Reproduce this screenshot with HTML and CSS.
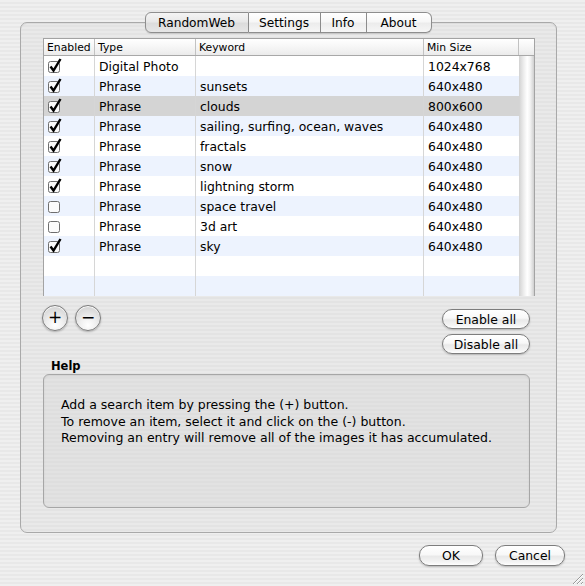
FILE: index.html
```html
<!DOCTYPE html>
<html>
<head>
<meta charset="utf-8">
<link rel="stylesheet" href="styles.css">
</head>
<body>
<div class="window">
  <div class="tabview">
    <div class="tabs">
      <span class="tab t1 active">RandomWeb</span><span class="tab t2">Settings</span><span class="tab t3">Info</span><span class="tab t4">About</span>
    </div>
    <div class="panel">
      <div class="table">
        <div class="thead">
          <div class="th">Enabled</div>
          <div class="th">Type</div>
          <div class="th">Keyword</div>
          <div class="th">Min Size</div>
          <div class="th corner"></div>
        </div>
        <div class="tbody">
          <div class="rows">
            <div class="row"><div class="td cb"><svg class="check" viewBox="0 0 16 16" width="16" height="16"><rect x="1.5" y="3.5" width="11" height="11" rx="2" class="box"/><path d="M3.5 8.5 L6.5 12.5 L13.5 1" class="mark"/></svg></div><div class="td">Digital Photo</div><div class="td"></div><div class="td">1024x768</div></div>
            <div class="row alt"><div class="td cb"><svg class="check" viewBox="0 0 16 16" width="16" height="16"><rect x="1.5" y="3.5" width="11" height="11" rx="2" class="box"/><path d="M3.5 8.5 L6.5 12.5 L13.5 1" class="mark"/></svg></div><div class="td">Phrase</div><div class="td">sunsets</div><div class="td">640x480</div></div>
            <div class="row sel"><div class="td cb"><svg class="check" viewBox="0 0 16 16" width="16" height="16"><rect x="1.5" y="3.5" width="11" height="11" rx="2" class="box"/><path d="M3.5 8.5 L6.5 12.5 L13.5 1" class="mark"/></svg></div><div class="td">Phrase</div><div class="td">clouds</div><div class="td">800x600</div></div>
            <div class="row alt"><div class="td cb"><svg class="check" viewBox="0 0 16 16" width="16" height="16"><rect x="1.5" y="3.5" width="11" height="11" rx="2" class="box"/><path d="M3.5 8.5 L6.5 12.5 L13.5 1" class="mark"/></svg></div><div class="td">Phrase</div><div class="td">sailing, surfing, ocean, waves</div><div class="td">640x480</div></div>
            <div class="row"><div class="td cb"><svg class="check" viewBox="0 0 16 16" width="16" height="16"><rect x="1.5" y="3.5" width="11" height="11" rx="2" class="box"/><path d="M3.5 8.5 L6.5 12.5 L13.5 1" class="mark"/></svg></div><div class="td">Phrase</div><div class="td">fractals</div><div class="td">640x480</div></div>
            <div class="row alt"><div class="td cb"><svg class="check" viewBox="0 0 16 16" width="16" height="16"><rect x="1.5" y="3.5" width="11" height="11" rx="2" class="box"/><path d="M3.5 8.5 L6.5 12.5 L13.5 1" class="mark"/></svg></div><div class="td">Phrase</div><div class="td">snow</div><div class="td">640x480</div></div>
            <div class="row"><div class="td cb"><svg class="check" viewBox="0 0 16 16" width="16" height="16"><rect x="1.5" y="3.5" width="11" height="11" rx="2" class="box"/><path d="M3.5 8.5 L6.5 12.5 L13.5 1" class="mark"/></svg></div><div class="td">Phrase</div><div class="td">lightning storm</div><div class="td">640x480</div></div>
            <div class="row alt"><div class="td cb"><svg class="check" viewBox="0 0 16 16" width="16" height="16"><rect x="1.5" y="3.5" width="11" height="11" rx="2" class="box"/></svg></div><div class="td">Phrase</div><div class="td">space travel</div><div class="td">640x480</div></div>
            <div class="row"><div class="td cb"><svg class="check" viewBox="0 0 16 16" width="16" height="16"><rect x="1.5" y="3.5" width="11" height="11" rx="2" class="box"/></svg></div><div class="td">Phrase</div><div class="td">3d art</div><div class="td">640x480</div></div>
            <div class="row alt"><div class="td cb"><svg class="check" viewBox="0 0 16 16" width="16" height="16"><rect x="1.5" y="3.5" width="11" height="11" rx="2" class="box"/><path d="M3.5 8.5 L6.5 12.5 L13.5 1" class="mark"/></svg></div><div class="td">Phrase</div><div class="td">sky</div><div class="td">640x480</div></div>
            <div class="row"><div class="td cb"></div><div class="td"></div><div class="td"></div><div class="td"></div></div>
            <div class="row alt"><div class="td cb"></div><div class="td"></div><div class="td"></div><div class="td"></div></div>
          </div>
          <div class="vscroll"></div>
        </div>
      </div>

      <div class="controls">
        <div class="pm">
          <span class="round">+</span>
          <span class="round">−</span>
        </div>
        <div class="enable">
          <span class="pill wide">Enable all</span>
          <span class="pill wide">Disable all</span>
        </div>
      </div>

      <div class="help-label">Help</div>
      <div class="help-box">
        <p>Add a search item by pressing the (+) button.</p>
        <p>To remove an item, select it and click on the (-) button.</p>
        <p>Removing an entry will remove all of the images it has accumulated.</p>
      </div>
    </div>
  </div>

  <div class="footer">
    <span class="pill ok">OK</span>
    <span class="pill cancel">Cancel</span>
  </div>

  <svg class="grip" width="12" height="12" viewBox="0 0 12 12">
    <path d="M1 11 L11 1 M5 11 L11 5 M9 11 L11 9" stroke="#9a9a9a" stroke-width="1"/>
    <path d="M2 11 L11 2 M6 11 L11 6 M10 11 L11 10" stroke="#ffffff" stroke-width="1"/>
  </svg>
</div>
</body>
</html>
```

FILE: styles.css
```css
* { box-sizing: border-box; }
html, body { margin: 0; padding: 0; }
body {
  width: 585px;
  height: 586px;
  overflow: hidden;
  font-family: "DejaVu Sans", "Liberation Sans", sans-serif;
  font-size: 12px;
  color: #000;
  background: repeating-linear-gradient(to bottom, #efefef 0px, #efefef 2px, #e8e8e8 2px, #e8e8e8 4px);
}
.window {
  position: relative;
  width: 585px;
  height: 586px;
}
.tabview {
  margin: 0 28px 0 20px;
  padding-top: 12px;
}
.tabs {
  position: relative;
  z-index: 1;
  display: flex;
  justify-content: center;
  height: 21px;
  margin-left: -1px;
}
.tab {
  display: flex;
  align-items: center;
  justify-content: center;
  height: 21px;
  font-size: 12.2px;
  border: 1px solid #8e8e8e;
  border-left: none;
  background: linear-gradient(to bottom, #ffffff 0%, #f7f7f7 45%, #ececec 55%, #f6f6f6 100%);
  box-shadow: 0 1px 1px rgba(0,0,0,0.12);
}
.tab.active {
  background: linear-gradient(to bottom, #f4f4f4 0%, #e8e8e8 45%, #dcdcdc 55%, #e6e6e6 100%);
}
.t1 { width: 104px; border-left: 1px solid #8e8e8e; border-radius: 6px 0 0 6px; }
.t2 { width: 72px; }
.t3 { width: 46px; }
.t4 { width: 65px; border-radius: 0 6px 6px 0; }

.panel {
  margin-top: -11px;
  height: 511px;
  border: 1px solid #a9a9a9;
  border-radius: 7px;
  background: repeating-linear-gradient(to bottom, #e9e9e9 0px, #e9e9e9 2px, #e3e3e3 2px, #e3e3e3 4px);
  box-shadow: inset 0 1px 1px rgba(0,0,0,0.06);
  padding: 15px 21px 0 22px;
}

.table {
  width: 492px;
  height: 258px;
  border: 1px solid #a3a3a3;
  background: #fff;
}
.thead {
  display: grid;
  grid-template-columns: 51px 101px 228px 95px 15px;
  height: 17px;
  border-bottom: 1px solid #a8a8a8;
  background: linear-gradient(to bottom, #ffffff 0%, #f6f6f6 50%, #ebebeb 100%);
}
.th {
  font-size: 10.8px;
  line-height: 17px;
  padding-left: 3px;
  border-right: 1px solid #c2c2c2;
  white-space: nowrap;
  overflow: hidden;
}
.th.corner { border-right: none; }
.tbody {
  display: flex;
  height: 240px;
}
.rows { width: 475px; }
.row {
  display: grid;
  grid-template-columns: 51px 101px 228px 95px;
  height: 20px;
  background: #fff;
}
.row.alt { background: #edf3fe; }
.row.sel { background: #d4d4d4; }
.td {
  height: 20px;
  font-size: 12.4px;
  line-height: 22px;
  padding-left: 4px;
  border-right: 1px solid #d6d6d6;
  white-space: nowrap;
  overflow: hidden;
}
.td:last-child { border-right: none; }
.td.cb { padding-left: 3px; }
.check { display: block; margin-top: 2px; }
.check .box { fill: #fbfbfb; stroke: #6e6e6e; stroke-width: 1; }
.check .mark { fill: none; stroke: #000; stroke-width: 2.4; stroke-linejoin: miter; stroke-linecap: butt; }
.vscroll {
  width: 15px;
  height: 240px;
  background: linear-gradient(to right, #d2d2d2 0%, #ececec 30%, #ffffff 55%, #f2f2f2 75%, #cfcfcf 100%);
}

.controls {
  display: flex;
  justify-content: space-between;
  align-items: flex-start;
  height: 62px;
}
.pm {
  display: flex;
  gap: 7px;
  margin-top: 9px;
  margin-left: -1px;
}
.round {
  display: flex;
  align-items: center;
  justify-content: center;
  width: 26px;
  height: 26px;
  border-radius: 50%;
  border: 1px solid #7c7c7c;
  background: radial-gradient(circle at 50% 80%, #ffffff 0%, #f0f0f0 35%, #d8d8d8 75%, #c8c8c8 100%);
  box-shadow: 0 1px 2px rgba(0,0,0,0.25), inset 0 1px 1px #ffffff;
  font-size: 17px;
  line-height: 1;
  padding-bottom: 1px;
}
.enable {
  display: flex;
  flex-direction: column;
  gap: 5px;
  margin-top: 13px;
  margin-right: 5px;
}
.pill {
  display: flex;
  align-items: center;
  justify-content: center;
  height: 20px;
  border-radius: 10px;
  border: 1px solid #7d7d7d;
  background: linear-gradient(to bottom, #ffffff 0%, #f8f8f8 45%, #e9e9e9 55%, #f4f4f4 85%, #ffffff 100%);
  box-shadow: 0 1px 2px rgba(0,0,0,0.22);
  font-size: 12.4px;
}
.pill.wide { width: 88px; }

.help-label {
  font-weight: bold;
  font-size: 11.5px;
  height: 16px;
  line-height: 17px;
  padding-left: 8px;
}
.help-box {
  width: 487px;
  height: 134px;
  border: 1px solid #a6a6a6;
  border-radius: 6px;
  background: repeating-linear-gradient(to bottom, #e2e2e2 0px, #e2e2e2 2px, #dedede 2px, #dedede 4px);
  box-shadow: inset 0 1px 2px rgba(0,0,0,0.08);
  padding: 22px 0 0 17px;
}
.help-box p {
  margin: 0;
  line-height: 16.5px;
  font-size: 12.5px;
}

.footer {
  display: flex;
  justify-content: flex-end;
  gap: 12px;
  margin-top: 12px;
  padding-right: 20px;
}
.pill.ok { width: 64px; height: 21px; }
.pill.cancel { width: 70px; height: 21px; }

.grip {
  position: absolute;
  right: 1px;
  bottom: 1px;
}
```
